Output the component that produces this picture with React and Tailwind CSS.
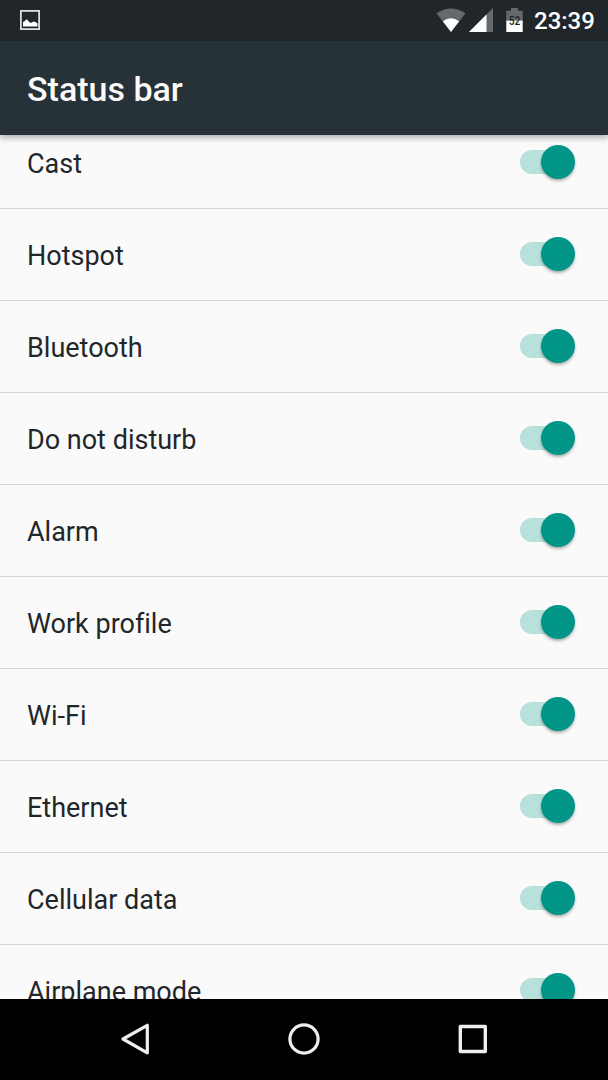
import React from 'react';

const items = [
    'Cast',
    'Hotspot',
    'Bluetooth',
    'Do not disturb',
    'Alarm',
    'Work profile',
    'Wi-Fi',
    'Ethernet',
    'Cellular data',
    'Airplane mode',
];

const PictureIcon = () => (
    <svg className="w-[22px] h-[22px]" viewBox="0 0 22 22">
        <rect x="1.9" y="1.9" width="18.2" height="18.2" fill="none" stroke="#dcdddd" strokeWidth="1.8" />
        <path d="M4 17.500v-4.500l1.500-.8 2-2 2 1.800 1 1.500 2 .3 2-1.300 2 .5 2 1.500v3z" fill="#fff" />
    </svg>
);

const WifiIcon = () => (
    <svg className="w-[30px] h-6" viewBox="0 0 30 24">
        <path d="M.5 5.200Q15-4.200 29.500 5.200L15 24z" fill="#66696b" />
        <path d="M6.800 13.200Q15 7.200 23.200 13.200L15 24z" fill="#fff" />
    </svg>
);

const SignalIcon = () => (
    <svg className="w-6 h-6" viewBox="0 0 24 24">
        <path d="M0 24L24 0v24z" fill="#66696b" />
        <path d="M0 24L17.500 6.500V24z" fill="#fff" />
    </svg>
);

const BatteryIcon = () => (
    <svg className="w-[17px] h-6" viewBox="0 0 17 24">
        <path d="M.3 2.800h4.700V0h7v2.800h4.700V12.500H.3z" fill="#66696b" />
        <path d="M.3 12.500h16.400V24H.3z" fill="#fff" />
        <text x="8.500" y="16.500" textAnchor="middle" fontSize="13.500" fontWeight="500" fontFamily="Roboto, sans-serif" textLength="11.500" lengthAdjust="spacingAndGlyphs" fill="#202629">52</text>
    </svg>
);

const StatusBar = () => (
    <div className="h-[41px] shrink-0 bg-[#202629] flex items-center justify-between pl-[19px] pr-[14px] pb-px">
        <PictureIcon />
        <div className="flex items-center">
            <WifiIcon />
            <div className="ml-[3px]">
                <SignalIcon />
            </div>
            <div className="ml-[13px]">
                <BatteryIcon />
            </div>
            <span className="ml-[11px] w-[60px] text-[24px] leading-6 font-medium text-white whitespace-nowrap pt-0.5">23:39</span>
        </div>
    </div>
);

const Toggle = () => (
    <div className="w-[55px] h-[34px] flex items-center mb-0.5">
        <div className="w-[45px] h-6 rounded-full bg-[#b8e1dc]" />
        <div className="w-[34px] h-[34px] -ml-6 rounded-full bg-[#009587] shadow-[0_2px_3px_rgba(0,0,0,0.3)]" />
    </div>
);

const Row = ({ label }) => (
    <div className="h-[92px] shrink-0 flex items-center justify-between pl-[27px] pr-[33px] border-b border-[#d4d4d4]">
        <span className="pt-0.5 text-[27px] leading-8 text-[#1f272a] whitespace-nowrap [font-variant-ligatures:none]">{label}</span>
        <Toggle />
    </div>
);

const NavBar = () => (
    <div className="h-[81px] shrink-0 bg-black flex items-center pl-[119px] pr-[119px] pb-px justify-between">
        <svg className="w-8 h-9" viewBox="0 0 32 36" fill="none" stroke="#eee" strokeWidth="3.200" strokeLinejoin="round">
            <path d="M28.300 4.300v27.500L4 18z" />
        </svg>
        <svg className="w-9 h-9" viewBox="0 0 36 36" fill="none" stroke="#eee" strokeWidth="3.200">
            <circle cx="18" cy="18" r="14.100" />
        </svg>
        <svg className="w-8 h-8" viewBox="0 0 32 32" fill="none" stroke="#eee" strokeWidth="3.400" strokeLinejoin="round">
            <rect x="3.300" y="3.500" width="25" height="25" />
        </svg>
    </div>
);

const App = () => {
    return (
        <div className="w-[608px] h-[1080px] flex flex-col overflow-hidden bg-[#fafafa] font-['Roboto',sans-serif]">
            <StatusBar />
            <header className="relative z-10 h-[94px] shrink-0 bg-[#273238] flex items-center pl-[27px] pt-0.5 shadow-[0_3px_6px_rgba(0,0,0,0.3)]">
                <h1 className="text-[34px] leading-10 font-medium text-[#fafafa] whitespace-nowrap">Status bar</h1>
            </header>
            <main className="flex-1 min-h-0 overflow-hidden">
                <div className="-mt-[18px] flex flex-col">
                    {items.map((label) => (
                        <Row key={label} label={label} />
                    ))}
                </div>
            </main>
            <NavBar />
        </div>
    );
};

export default App;
